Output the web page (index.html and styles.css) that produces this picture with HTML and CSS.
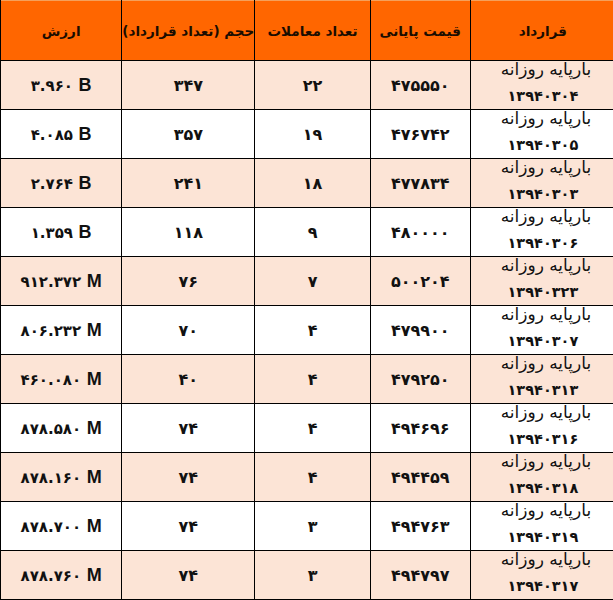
FILE: index.html
```html
<!DOCTYPE html>
<html lang="fa">
<head>
<meta charset="utf-8">
<link rel="stylesheet" href="styles.css">
</head>
<body>
<div class="wrap">
<table class="grid" dir="rtl">
<colgroup>
<col class="c-contract"><col class="c-price"><col class="c-count"><col class="c-vol"><col class="c-val">
</colgroup>
<thead>
<tr><th>قرارداد</th><th>قیمت پایانی</th><th>تعداد معاملات</th><th>حجم (تعداد قرارداد)</th><th>ارزش</th></tr>
</thead>
<tbody>
<tr class="alt"><td class="contract"><div class="cbox"><span class="cname">بارپایه روزانه</span><span class="cdate">۱۳۹۴۰۳۰۴</span></div></td><td>۴۷۵۵۵۰</td><td>۲۲</td><td>۳۴۷</td><td class="val"><span class="num">۳.۹۶۰</span> <span class="unit">B</span></td></tr>
<tr><td class="contract"><div class="cbox"><span class="cname">بارپایه روزانه</span><span class="cdate">۱۳۹۴۰۳۰۵</span></div></td><td>۴۷۶۷۴۲</td><td>۱۹</td><td>۳۵۷</td><td class="val"><span class="num">۴.۰۸۵</span> <span class="unit">B</span></td></tr>
<tr class="alt"><td class="contract"><div class="cbox"><span class="cname">بارپایه روزانه</span><span class="cdate">۱۳۹۴۰۳۰۳</span></div></td><td>۴۷۷۸۳۴</td><td>۱۸</td><td>۲۴۱</td><td class="val"><span class="num">۲.۷۶۴</span> <span class="unit">B</span></td></tr>
<tr><td class="contract"><div class="cbox"><span class="cname">بارپایه روزانه</span><span class="cdate">۱۳۹۴۰۳۰۶</span></div></td><td>۴۸۰۰۰۰</td><td>۹</td><td>۱۱۸</td><td class="val"><span class="num">۱.۳۵۹</span> <span class="unit">B</span></td></tr>
<tr class="alt"><td class="contract"><div class="cbox"><span class="cname">بارپایه روزانه</span><span class="cdate">۱۳۹۴۰۳۲۳</span></div></td><td>۵۰۰۲۰۴</td><td>۷</td><td>۷۶</td><td class="val"><span class="num">۹۱۲.۳۷۲</span> <span class="unit">M</span></td></tr>
<tr><td class="contract"><div class="cbox"><span class="cname">بارپایه روزانه</span><span class="cdate">۱۳۹۴۰۳۰۷</span></div></td><td>۴۷۹۹۰۰</td><td>۴</td><td>۷۰</td><td class="val"><span class="num">۸۰۶.۲۳۲</span> <span class="unit">M</span></td></tr>
<tr class="alt"><td class="contract"><div class="cbox"><span class="cname">بارپایه روزانه</span><span class="cdate">۱۳۹۴۰۳۱۳</span></div></td><td>۴۷۹۲۵۰</td><td>۴</td><td>۴۰</td><td class="val"><span class="num">۴۶۰.۰۸۰</span> <span class="unit">M</span></td></tr>
<tr><td class="contract"><div class="cbox"><span class="cname">بارپایه روزانه</span><span class="cdate">۱۳۹۴۰۳۱۶</span></div></td><td>۴۹۴۶۹۶</td><td>۴</td><td>۷۴</td><td class="val"><span class="num">۸۷۸.۵۸۰</span> <span class="unit">M</span></td></tr>
<tr class="alt"><td class="contract"><div class="cbox"><span class="cname">بارپایه روزانه</span><span class="cdate">۱۳۹۴۰۳۱۸</span></div></td><td>۴۹۴۴۵۹</td><td>۴</td><td>۷۴</td><td class="val"><span class="num">۸۷۸.۱۶۰</span> <span class="unit">M</span></td></tr>
<tr><td class="contract"><div class="cbox"><span class="cname">بارپایه روزانه</span><span class="cdate">۱۳۹۴۰۳۱۹</span></div></td><td>۴۹۴۷۶۳</td><td>۳</td><td>۷۴</td><td class="val"><span class="num">۸۷۸.۷۰۰</span> <span class="unit">M</span></td></tr>
<tr class="alt"><td class="contract"><div class="cbox"><span class="cname">بارپایه روزانه</span><span class="cdate">۱۳۹۴۰۳۱۷</span></div></td><td>۴۹۴۷۹۷</td><td>۳</td><td>۷۴</td><td class="val"><span class="num">۸۷۸.۷۶۰</span> <span class="unit">M</span></td></tr>
</tbody>
</table>
</div>
</body>
</html>
```

FILE: styles.css
```css
html, body {
  margin: 0;
  padding: 0;
  background: #ffffff;
}
.wrap {
  width: 613px;
  height: 600px;
  overflow: hidden;
}
.grid {
  border-collapse: collapse;
  table-layout: fixed;
  width: 616px;
  margin-left: 0;
  font-family: "DejaVu Sans", sans-serif;
  color: #111;
}
.c-contract { width: 145px; }
.c-price { width: 100px; }
.c-count { width: 115px; }
.c-vol { width: 133px; }
.c-val { width: 121px; }
.grid th {
  background: #ff6600;
  height: 59px;
  padding: 0;
  border: 1px solid #000;
  border-top: 1px solid #f5a05a;
  font-size: 13.5px;
  font-weight: bold;
  text-align: center;
  vertical-align: middle;
  white-space: nowrap;
  letter-spacing: -0.2px;
  color: #1a0d00;
}
.grid td {
  height: 48px;
  padding: 0;
  border: 1px solid #000;
  text-align: center;
  vertical-align: middle;
  font-size: 16px;
  font-weight: bold;
  white-space: nowrap;
}
.grid tr.alt td {
  background: #fce4d6;
}
.cbox {
  height: 48px;
  display: flex;
  flex-direction: column;
  justify-content: space-between;
  align-items: center;
  line-height: 18px;
  padding-bottom: 3px;
  box-sizing: border-box;
  margin-top: -3px;
}
.cname {
  font-weight: normal;
  font-size: 17px;
  padding-left: 6px;
}
.cdate {
  font-weight: bold;
  font-size: 14.5px;
}
.val {
  direction: ltr;
}
.num {
  font-size: 15px;
}
.unit {
  font-family: "Liberation Sans", Arial, sans-serif;
  font-size: 18px;
  font-weight: bold;
}
```
